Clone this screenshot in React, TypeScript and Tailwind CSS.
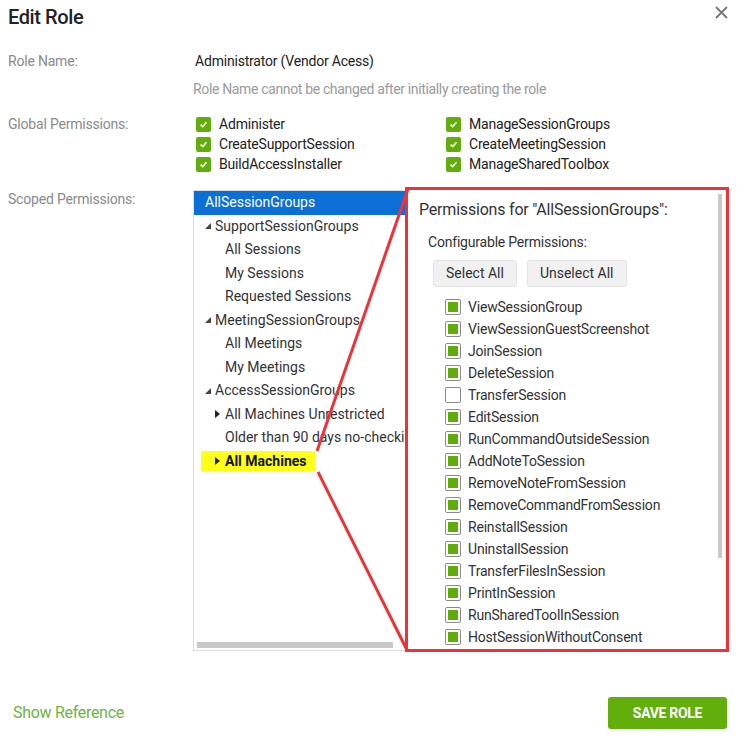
import React from "react";

const globalLeft = ["Administer", "CreateSupportSession", "BuildAccessInstaller"];
const globalRight = ["ManageSessionGroups", "CreateMeetingSession", "ManageSharedToolbox"];

type TreeRow = { label: string; level: number; arrow?: "open" | "closed"; selected?: boolean; marked?: boolean };

const tree: TreeRow[] = [
  { label: "AllSessionGroups", level: 0, selected: true },
  { label: "SupportSessionGroups", level: 1, arrow: "open" },
  { label: "All Sessions", level: 2 },
  { label: "My Sessions", level: 2 },
  { label: "Requested Sessions", level: 2 },
  { label: "MeetingSessionGroups", level: 1, arrow: "open" },
  { label: "All Meetings", level: 2 },
  { label: "My Meetings", level: 2 },
  { label: "AccessSessionGroups", level: 1, arrow: "open" },
  { label: "All Machines Unrestricted", level: 2, arrow: "closed" },
  { label: "Older than 90 days no-checkin", level: 2 },
  { label: "All Machines", level: 2, arrow: "closed", marked: true },
];

const perms: [string, boolean][] = [
  ["ViewSessionGroup", true],
  ["ViewSessionGuestScreenshot", true],
  ["JoinSession", true],
  ["DeleteSession", true],
  ["TransferSession", false],
  ["EditSession", true],
  ["RunCommandOutsideSession", true],
  ["AddNoteToSession", true],
  ["RemoveNoteFromSession", true],
  ["RemoveCommandFromSession", true],
  ["ReinstallSession", true],
  ["UninstallSession", true],
  ["TransferFilesInSession", true],
  ["PrintInSession", true],
  ["RunSharedToolInSession", true],
  ["HostSessionWithoutConsent", true],
];

function GreenCheck({ label }: { label: string }) {
  return (
    <div className="flex items-center h-5">
      <span className="w-[15px] h-[15px] rounded-[2px] bg-[#62ad0d] flex items-center justify-center shrink-0">
        <svg width="9" height="9" viewBox="0 0 10 10">
          <path d="M1.8 5.2 L4.1 7.4 L8.3 2.6" fill="none" stroke="#fff" strokeWidth="1.8" />
        </svg>
      </span>
      <span className="ml-2 text-[14px] text-[#222] tracking-[-0.2px]">{label}</span>
    </div>
  );
}

function Arrow({ kind }: { kind: "open" | "closed" }) {
  if (kind === "open")
    return (
      <svg width="6" height="6" viewBox="0 0 6 6" className="mr-[4px]">
        <path d="M6 0 L6 6 L0 6 Z" fill="#444" />
      </svg>
    );
  return (
    <svg width="5" height="8" viewBox="0 0 5 8" className="mr-[5px]">
      <path d="M0 0 L5 4 L0 8 Z" fill="#222" />
    </svg>
  );
}

export default function App() {
  return (
    <div className="relative w-[746px] h-[752px] bg-white overflow-hidden text-[#333]" style={{ fontFamily: "Roboto, 'Noto Sans', sans-serif" }}>
      {/* Header */}
      <div className="flex items-center justify-between pl-2 pr-[18px] h-[33px]">
        <h1 className="text-[20px] font-medium text-[#222] tracking-[-0.4px]">Edit Role</h1>
        <svg width="13" height="13" viewBox="0 0 13 13" className="-mt-2">
          <path d="M1 1 L12 12 M12 1 L1 12" stroke="#777" strokeWidth="1.8" />
        </svg>
      </div>

      {/* Role name */}
      <div className="flex pl-2 mt-[18px]">
        <div className="w-[185px] text-[14px] text-[#8a8a8a] leading-5 tracking-[-0.2px]">Role Name:</div>
        <div className="flex flex-col">
          <span className="text-[14px] text-[#222] leading-5 ml-[2px] tracking-[-0.2px]">Administrator (Vendor Acess)</span>
          <span className="text-[14px] text-[#9a9a9a] leading-5 mt-2 tracking-[-0.35px]">Role Name cannot be changed after initially creating the role</span>
        </div>
      </div>

      {/* Global permissions */}
      <div className="flex pl-2 mt-[15px]">
        <div className="w-[188px] text-[14px] text-[#8a8a8a] leading-5 tracking-[-0.2px]">Global Permissions:</div>
        <div className="flex">
          <div className="w-[250px] flex flex-col">
            {globalLeft.map((g) => (
              <GreenCheck key={g} label={g} />
            ))}
          </div>
          <div className="flex flex-col">
            {globalRight.map((g) => (
              <GreenCheck key={g} label={g} />
            ))}
          </div>
        </div>
      </div>

      {/* Scoped permissions */}
      <div className="flex pl-2 mt-[15px]">
        <div className="w-[185px] text-[14px] text-[#8a8a8a] leading-5 tracking-[-0.2px]">Scoped Permissions:</div>
        <div className="flex mt-[-2px] h-[465px]">
          {/* Tree */}
          <div className="w-[213px] h-[461px] mt-[3px] border border-[#dcdcdc] flex flex-col overflow-hidden">
            <div className="flex-1">
              {tree.map((r) => (
                <div
                  key={r.label}
                  className={
                    "flex items-center h-[23.5px] text-[14px] whitespace-nowrap " +
                    (r.selected ? "bg-[#0b6fd6] text-white" : "text-[#333]")
                  }
                  style={{ paddingLeft: r.level === 0 ? 11 : r.arrow ? (r.level === 1 ? 11 : 21) : r.level === 1 ? 21 : 31 }}
                >
                  {r.marked ? (
                    <span className="flex items-center bg-[#ffff1a] h-[20px] pl-[14px] pr-[9px] -ml-[14px] font-bold text-[#111]">
                      <Arrow kind="closed" />
                      {r.label}
                    </span>
                  ) : (
                    <>
                      {r.arrow && <Arrow kind={r.arrow} />}
                      <span>{r.label}</span>
                    </>
                  )}
                </div>
              ))}
            </div>
            <div className="h-[8px] px-[3px] pb-[2px] flex items-end">
              <div className="h-[6px] w-[196px] bg-[#c9c9c9]" />
            </div>
          </div>

          {/* Permissions panel */}
          <div className="relative w-[324px] h-[465px] -ml-[1px] border-[3px] border-[#ee3338] pl-[11px] pt-[8px] overflow-hidden">
            <div className="absolute right-[4px] top-[4px] w-[4px] h-[364px] bg-[#c9c9c9]" />
            <div className="text-[16px] text-[#333] leading-6 tracking-[-0.2px]">Permissions for "AllSessionGroups":</div>
            <div className="pl-[9px] mt-[10px]">
              <div className="text-[14px] text-[#333] leading-5 tracking-[-0.2px]">Configurable Permissions:</div>
              <div className="flex gap-[10px] mt-[8px] ml-[5px]">
                <button className="h-[27px] px-[12px] bg-[#f1f1f1] border border-[#e3e3e3] rounded-[3px] text-[14px] text-[#333]">Select All</button>
                <button className="h-[27px] px-[12px] bg-[#f1f1f1] border border-[#e3e3e3] rounded-[3px] text-[14px] text-[#333]">Unselect All</button>
              </div>
              <div className="mt-[9px] ml-[17px] flex flex-col">
                {perms.map(([p, on]) => (
                  <div key={p} className="flex items-center h-[22px]">
                    <span className="w-[16px] h-[16px] border border-[#8a8a8a] rounded-[2px] flex items-center justify-center shrink-0 bg-white">
                      {on && <span className="w-[10px] h-[10px] bg-[#5fad0b]" />}
                    </span>
                    <span className="ml-[7px] text-[14px] text-[#333] tracking-[-0.2px]">{p}</span>
                  </div>
                ))}
              </div>
            </div>
          </div>
        </div>
      </div>

      {/* Footer */}
      <div className="flex items-center justify-between pl-[13px] pr-[19px] mt-[45px]">
        <span className="text-[16px] text-[#6db33f] tracking-[-0.3px]">Show Reference</span>
        <button className="w-[119px] h-[32px] bg-[#62ae0b] rounded-[3px] text-white text-[14px] font-bold tracking-[-0.3px]">SAVE ROLE</button>
      </div>

      {/* Annotation lines */}
      <svg className="absolute inset-0 pointer-events-none" width="746" height="752">
        <line x1="317" y1="451" x2="408" y2="189" stroke="#ee3338" strokeWidth="3" />
        <line x1="318" y1="472" x2="407" y2="650" stroke="#ee3338" strokeWidth="3" />
      </svg>
    </div>
  );
}
